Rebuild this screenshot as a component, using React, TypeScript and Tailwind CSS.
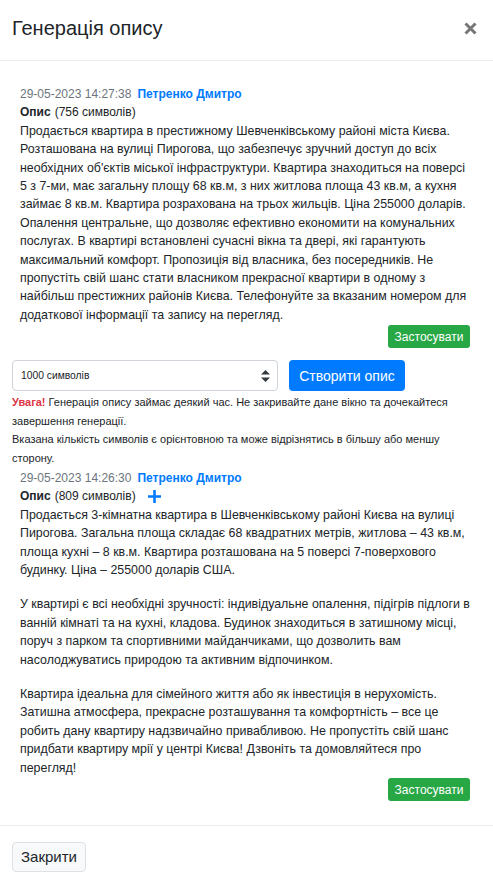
import { useState } from "react";

type Item = {
  date: string;
  author: string;
  count: number;
  text: string[];
  plus?: boolean;
};

const items: Item[] = [
  {
    date: "29-05-2023 14:27:38",
    author: "Петренко Дмитро",
    count: 756,
    text: [
      "Продається квартира в престижному Шевченківському районі міста Києва. Розташована на вулиці Пирогова, що забезпечує зручний доступ до всіх необхідних об'єктів міської інфраструктури. Квартира знаходиться на поверсі 5 з 7-ми, має загальну площу 68 кв.м, з них житлова площа 43 кв.м, а кухня займає 8 кв.м. Квартира розрахована на трьох жильців. Ціна 255000 доларів. Опалення центральне, що дозволяє ефективно економити на комунальних послугах. В квартирі встановлені сучасні вікна та двері, які гарантують максимальний комфорт. Пропозиція від власника, без посередників. Не пропустіть свій шанс стати власником прекрасної квартири в одному з найбільш престижних районів Києва. Телефонуйте за вказаним номером для додаткової інформації та запису на перегляд.",
    ],
  },
  {
    date: "29-05-2023 14:26:30",
    author: "Петренко Дмитро",
    count: 809,
    plus: true,
    text: [
      "Продається 3-кімнатна квартира в Шевченківському районі Києва на вулиці Пирогова. Загальна площа складає 68 квадратних метрів, житлова – 43 кв.м, площа кухні – 8 кв.м. Квартира розташована на 5 поверсі 7-поверхового будинку. Ціна – 255000 доларів США.",
      "У квартирі є всі необхідні зручності: індивідуальне опалення, підігрів підлоги в ванній кімнаті та на кухні, кладова. Будинок знаходиться в затишному місці, поруч з парком та спортивними майданчиками, що дозволить вам насолоджуватись природою та активним відпочинком.",
      "Квартира ідеальна для сімейного життя або як інвестиція в нерухомість. Затишна атмосфера, прекрасне розташування та комфортність – все це робить дану квартиру надзвичайно привабливою. Не пропустіть свій шанс придбати квартиру мрії у центрі Києва! Дзвоніть та домовляйтеся про перегляд!",
    ],
  },
];

const Description = ({ item, className }: { item: Item; className: string }) => (
  <div className={`pl-2 pr-[11px] pb-3 ${className}`}>
    <div>
      <span className="text-[#6c757d]">{item.date}</span>
      <span className="ml-[6px] font-bold text-[#007bff]">{item.author}</span>
    </div>
    <div className="flex items-center">
      <span className="font-bold">Опис</span>
      <span className="ml-1">({item.count} символів)</span>
      {item.plus && (
        <svg className="ml-[12px] w-[13px] h-[13px]" viewBox="0 0 13 13">
          <path d="M6.5 0v13M0 6.5h13" stroke="#007bff" strokeWidth="2.6" />
        </svg>
      )}
    </div>
    <div className="flex flex-col gap-[16px] text-[12.4px]">
      {item.text.map((p, i) => (
        <p key={i}>{p}</p>
      ))}
    </div>
    <div className="flex justify-end mt-px">
      <button className="h-[23px] w-[82px] flex items-center justify-center rounded-[3px] bg-[#28a745] text-white text-[12px] leading-none">
        Застосувати
      </button>
    </div>
  </div>
);

export default function App() {
  const [size, setSize] = useState("1000");

  return (
    <div className="w-[493px] min-h-[887px] bg-white text-[#212529] text-[12px] leading-[18.4px] font-['Liberation_Sans',Arial,sans-serif]">
      {/* Header */}
      <div className="h-[61px] px-3 flex items-center justify-between border-b border-[#e9ecef]">
        <h5 className="text-[20px] leading-[24px] pb-[4px]">Генерація опису</h5>
        <button className="mr-[4px] mb-[3px]">
          <svg width="13" height="13" viewBox="0 0 13 13">
            <path d="M1.5 1.5l10 10M11.5 1.5l-10 10" stroke="#777" strokeWidth="3" />
          </svg>
        </button>
      </div>

      {/* Body */}
      <div className="px-3 pt-3 pb-3">
        <Description item={items[0]} className="pt-3" />

        <div className="flex items-center gap-[11px]">
          <div className="relative w-[266px]">
            <select
              value={size}
              onChange={(e) => setSize(e.target.value)}
              className="appearance-none w-full h-[31px] pl-[8px] pr-6 border border-[#ced4da] rounded-[4px] text-[10.3px] bg-white"
            >
              <option value="500">500 символів</option>
              <option value="1000">1000 символів</option>
              <option value="1500">1500 символів</option>
            </select>
            <svg className="absolute right-[8px] top-[10px] pointer-events-none" width="9" height="12" viewBox="0 0 9 12">
              <path d="M4.5 0L9 4.5H0z M4.5 12L0 7.5h9z" fill="#343a40" />
            </svg>
          </div>
          <button className="h-[31px] w-[116px] rounded-[4px] bg-[#007bff] text-white text-[14px]">
            Створити опис
          </button>
        </div>

        <div className="mt-[2px] text-[11px]">
          <p>
            <span className="font-bold text-[#dc3545]">Увага!</span> Генерація опису займає деякий час. Не закривайте дане вікно та дочекайтеся завершення генерації.
          </p>
          <p>Вказана кількість символів є орієнтовною та може відрізнятись в більшу або меншу сторону.</p>
        </div>

        <Description item={items[1]} className="pt-[2px]" />
      </div>

      {/* Footer */}
      <div className="border-t border-[#e9ecef] px-3 pt-4 pb-3">
        <button className="h-[30px] px-[8px] rounded-[4px] border border-[#dee2e6] bg-[#f8f9fa] text-[15px] text-[#212529]">
          Закрити
        </button>
      </div>
    </div>
  );
}
